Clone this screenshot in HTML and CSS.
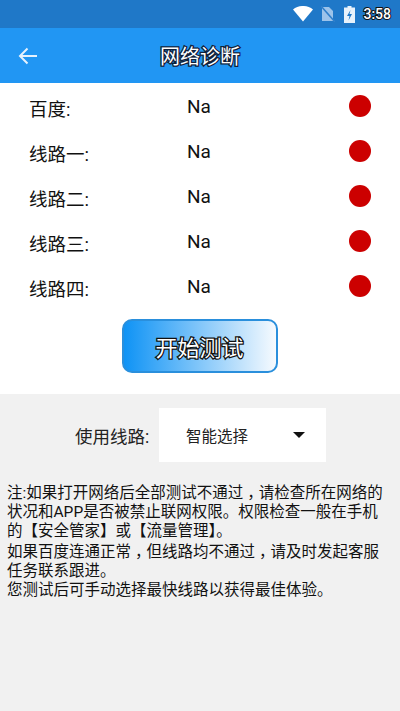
FILE: index.html
```html
<!DOCTYPE html>
<html lang="zh">
<head>
<meta charset="utf-8">
<title>网络诊断</title>
<link rel="stylesheet" href="styles.css">
</head>
<body>
<div class="status">
  <svg class="ic-wifi" viewBox="0 0 20 16"><path d="M0 3.500C5.500-1.200 14.500-1.200 20 3.500L10 15.500Z" fill="#fff"/></svg>
  <svg class="ic-sim" viewBox="0 0 14 16"><path d="M1 1h7l4 4v10H1z" fill="#9cc3ea"/><path d="M0 0l14 16" stroke="#2f7fcb" stroke-width="1.500"/></svg>
  <svg class="ic-bat" viewBox="0 0 11 17"><path d="M3.500 0h4v1.500H11V17H0V1.500h3.500z" fill="#e8f2fb"/><path d="M6.500 4L3 10h2.500L4.500 14.500 8 8H5.500z" fill="#1f78c8"/></svg>
  <span class="time">3:58</span>
</div>
<header class="bar">
  <svg class="back" viewBox="0 0 20 18"><path d="M19 9H2M9.500 1.500L2 9l7.500 7.500" fill="none" stroke="#e6f2fd" stroke-width="2"/></svg>
  <h1 class="title">网络诊断</h1>
</header>
<main class="panel">
  <div class="row"><span class="name">百度:</span><span class="val">Na</span><span class="dot"></span></div>
  <div class="row"><span class="name">线路一:</span><span class="val">Na</span><span class="dot"></span></div>
  <div class="row"><span class="name">线路二:</span><span class="val">Na</span><span class="dot"></span></div>
  <div class="row"><span class="name">线路三:</span><span class="val">Na</span><span class="dot"></span></div>
  <div class="row"><span class="name">线路四:</span><span class="val">Na</span><span class="dot"></span></div>
  <div class="btn-wrap"><button class="btn">开始测试</button></div>
</main>
<section class="lower">
  <div class="choose">
    <span class="choose-label">使用线路:</span>
    <div class="select"><span>智能选择</span><i class="caret"></i></div>
  </div>
  <div class="notes">
    <p>注:如果打开网络后全部测试不通过<span class="comma">，</span>请检查所在网络的<br>状况和APP是否被禁止联网权限。权限检查一般在手机<br>的【安全管家】或【流量管理】。</p>
    <p>如果百度连通正常<span class="comma">，</span>但线路均不通过<span class="comma">，</span>请及时发起客服<br>任务联系跟进。</p>
    <p>您测试后可手动选择最快线路以获得最佳体验。</p>
  </div>
</section>
</body>
</html>
```
FILE: styles.css
```css
* { box-sizing: border-box; }
html, body { margin: 0; height: 100%; }
body {
  width: 400px;
  height: 711px;
  overflow: hidden;
  background: #f1f1f1;
  font-family: Roboto, "Noto Sans CJK SC", sans-serif;
  display: flex;
  flex-direction: column;
}
.status {
  height: 28px;
  background: #1f78c8;
  display: flex;
  align-items: center;
  justify-content: flex-end;
  padding-right: 9px;
  flex: none;
}
.ic-wifi { width: 20px; height: 16px; margin-right: 8px; }
.ic-sim { width: 14px; height: 16px; margin-right: 9px; }
.ic-bat { width: 11px; height: 17px; margin-right: 8px; }
.time {
  color: #fff;
  font-size: 14px;
  font-weight: 500;
  -webkit-text-stroke: 2px #111;
  paint-order: stroke fill;
}
.bar {
  height: 55px;
  flex: none;
  background: #2196f3;
  display: flex;
  align-items: center;
  justify-content: center;
  position: relative;
}
.back { position: absolute; left: 18px; top: 19px; width: 20px; height: 18px; }
.title {
  margin: 0;
  color: #fff;
  font-size: 20px;
  font-weight: 400;
  -webkit-text-stroke: 2.500px #10203a;
  paint-order: stroke fill;
}
.panel {
  background: #fff;
  height: 311px;
  flex: none;
}
.row {
  height: 45px;
  display: flex;
  align-items: center;
  font-size: 18.500px;
  color: #111;
}
.name { width: 157px; padding-left: 29px; padding-top: 4px; }
.val { width: 192px; padding-left: 30px; padding-top: 2px; font-size: 19px; }
.dot {
  width: 22px;
  height: 22px;
  border-radius: 50%;
  background: #cc0000;
}
.btn-wrap { display: flex; justify-content: center; margin-top: 11px; padding-right: 1px; }
.btn {
  width: 156px;
  height: 54px;
  border: 2px solid #2a8fdc;
  border-radius: 10px;
  background: linear-gradient(90deg, #0f93f5, #f6fafe);
  color: #fff;
  font-family: inherit;
  font-size: 22px;
  padding: 0;
  -webkit-text-stroke: 2.500px #111;
  paint-order: stroke fill;
}
.lower { flex: 1; padding-top: 14px; }
.choose { display: flex; align-items: center; height: 54px; }
.choose-label { width: 159px; padding-left: 75px; font-size: 17.500px; color: #222; white-space: nowrap; }
.select {
  width: 167px;
  height: 54px;
  background: #fff;
  display: flex;
  align-items: center;
  padding-left: 27px;
  font-size: 15.500px;
  color: #222;
  position: relative;
}
.caret {
  position: absolute;
  left: 134px;
  top: 24px;
  border-left: 6px solid transparent;
  border-right: 6px solid transparent;
  border-top: 6px solid #111;
}
.notes { padding: 22px 0 0 7px; font-size: 15.500px; line-height: 19px; color: #111; white-space: nowrap; }
.notes p { margin: 0; }
.notes p:first-child { margin-bottom: 2px; }
.comma { font-feature-settings: "halt"; padding: 0 0.25em; }
```
